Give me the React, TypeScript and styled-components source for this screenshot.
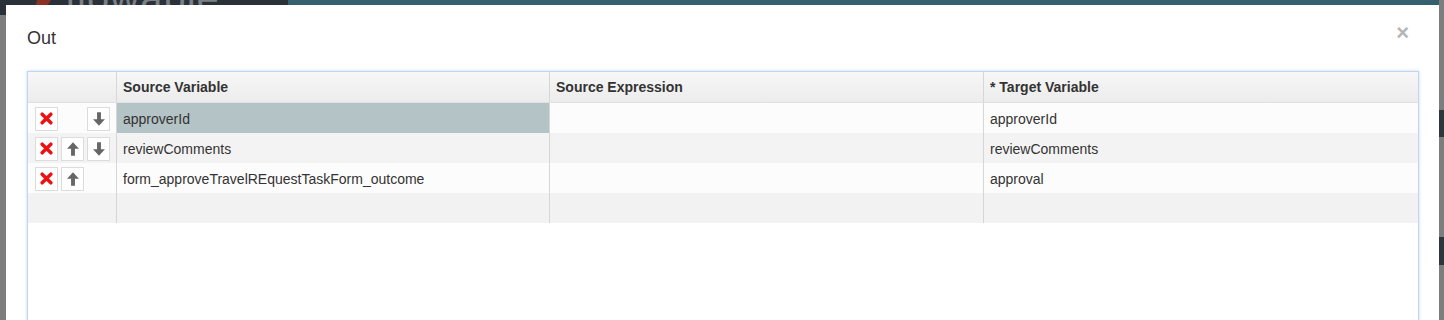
import styled, { createGlobalStyle } from "styled-components";

const GlobalStyle = createGlobalStyle`
  html, body {
    margin: 0;
    padding: 0;
    background: #7d7d7d;
    font-family: "Liberation Sans", Arial, sans-serif;
    overflow: hidden;
  }
`;

// page behind the modal (dimmed)
const Page = styled.div`
  position: relative;
  width: 1444px;
  height: 320px;
  overflow: hidden;
`;

const TopBar = styled.div`
  display: flex;
  height: 15px;
  overflow: hidden;
`;

const Brand = styled.div`
  width: 288px;
  background: #2a3139;
  display: flex;
  align-items: flex-end;
  gap: 8px;
  padding-left: 33px;
  box-sizing: border-box;
`;

const BrandText = styled.span`
  font-size: 40px;
  line-height: 40px;
  margin-bottom: -3px;
  color: #7a8086;
  letter-spacing: 1px;
`;

const TealBar = styled.div`
  flex: 1;
  background: #36606f;
`;

const SideBands = styled.div`
  position: absolute;
  right: 0;
  top: 0;
  width: 5px;
  height: 320px;
  display: flex;
  flex-direction: column;
`;

const Band = styled.div<{ $h: number; $dark?: boolean }>`
  height: ${(p) => p.$h}px;
  background: ${(p) => (p.$dark ? "#2d353d" : "#7d7d7d")};
`;

const Modal = styled.div`
  position: absolute;
  left: 6px;
  top: 5px;
  width: 1433px;
  height: 330px;
  background: #fff;
  box-sizing: border-box;
  padding: 0 20px 0 21px;
`;

const ModalHeader = styled.div`
  display: flex;
  justify-content: space-between;
  align-items: center;
  height: 66px;
`;

const Title = styled.h4`
  margin: 0;
  font-size: 18px;
  font-weight: normal;
  color: #333;
`;

const Close = styled.span`
  font-size: 22px;
  font-weight: bold;
  color: #b5b5b5;
  margin-right: 10px;
  margin-top: -10px;
`;

const Grid = styled.div`
  border: 1px solid #c3d6ec;
  box-shadow: 0 0 3px rgba(120, 170, 230, 0.45);
  height: 300px;
  background: #fff;
`;

const Row = styled.div<{ $bg: string; $h: number }>`
  display: grid;
  grid-template-columns: 89px 433px 434px 1fr;
  height: ${(p) => p.$h}px;
  background: ${(p) => p.$bg};
`;

const HeaderRow = styled(Row)`
  background: linear-gradient(#f7f7f7, #ececec);
  border-bottom: 1px solid #e0e0e0;
  box-sizing: border-box;
`;

const Cell = styled.div<{ $sel?: boolean; $bold?: boolean }>`
  display: flex;
  align-items: center;
  padding-left: 6px;
  padding-top: ${(p) => (p.$bold ? 0 : 2)}px;
  border-right: 1px solid #d6d6d6;
  font-size: 14px;
  font-weight: ${(p) => (p.$bold ? "bold" : "normal")};
  color: #333;
  background: ${(p) => (p.$sel ? "#b4c3c6" : "transparent")};
  white-space: nowrap;
  overflow: hidden;
  &:last-child {
    border-right: none;
  }
`;

const Actions = styled.div`
  display: grid;
  grid-template-columns: 23px 23px 23px;
  gap: 3px;
  align-items: center;
  padding: 1px 0 0 7px;
  border-right: 1px solid #d6d6d6;
`;

const Btn = styled.div`
  width: 21px;
  height: 22px;
  border: 1px solid #dcdcdc;
  background: #fff;
  display: flex;
  align-items: center;
  justify-content: center;
`;

const Empty = styled.div``;

const DeleteIcon = () => (
  <svg width="13" height="13" viewBox="0 0 12 12">
    <path d="M2 2 L10 10 M10 2 L2 10" stroke="#ee1111" strokeWidth="3.2" strokeLinecap="round" />
  </svg>
);

const ArrowIcon = ({ up }: { up?: boolean }) => (
  <svg width="14" height="16" viewBox="0 0 12 14" style={up ? { transform: "rotate(180deg)" } : undefined}>
    <path d="M4.3 1 H7.7 V7.3 H11.2 L6 13 L0.8 7.3 H4.3 Z" fill="#666" />
  </svg>
);

const rows = [
  { src: "approverId", target: "approverId", up: false, down: true, bg: "#fcfcfc", sel: true },
  { src: "reviewComments", target: "reviewComments", up: true, down: true, bg: "#f3f3f3", sel: false },
  { src: "form_approveTravelREquestTaskForm_outcome", target: "approval", up: true, down: false, bg: "#fcfcfc", sel: false },
];

export default function App() {
  return (
    <Page>
      <GlobalStyle />
      <TopBar>
        <Brand>
          <svg width="24" height="15" viewBox="0 0 24 15">
            <path d="M4 0 L18 0 L8 15 L0 15 Z" fill="#8a3024" />
          </svg>
          <BrandText>flowable</BrandText>
        </Brand>
        <TealBar />
      </TopBar>
      <SideBands>
        <Band $h={110} />
        <Band $h={27} $dark />
        <Band $h={100} />
        <Band $h={28} $dark />
      </SideBands>
      <Modal>
        <ModalHeader>
          <Title>Out</Title>
          <Close>×</Close>
        </ModalHeader>
        <Grid>
          <HeaderRow $bg="#f0f0f0" $h={31}>
            <Cell />
            <Cell $bold>Source Variable</Cell>
            <Cell $bold>Source Expression</Cell>
            <Cell $bold>* Target Variable</Cell>
          </HeaderRow>
          {rows.map((r) => (
            <Row key={r.src} $bg={r.bg} $h={30}>
              <Actions>
                <Btn>
                  <DeleteIcon />
                </Btn>
                {r.up ? (
                  <Btn>
                    <ArrowIcon up />
                  </Btn>
                ) : (
                  <Empty />
                )}
                {r.down ? (
                  <Btn>
                    <ArrowIcon />
                  </Btn>
                ) : (
                  <Empty />
                )}
              </Actions>
              <Cell $sel={r.sel}>{r.src}</Cell>
              <Cell />
              <Cell>{r.target}</Cell>
            </Row>
          ))}
          <Row $bg="#f2f2f2" $h={30}>
            <Cell />
            <Cell />
            <Cell />
            <Cell />
          </Row>
        </Grid>
      </Modal>
    </Page>
  );
}
